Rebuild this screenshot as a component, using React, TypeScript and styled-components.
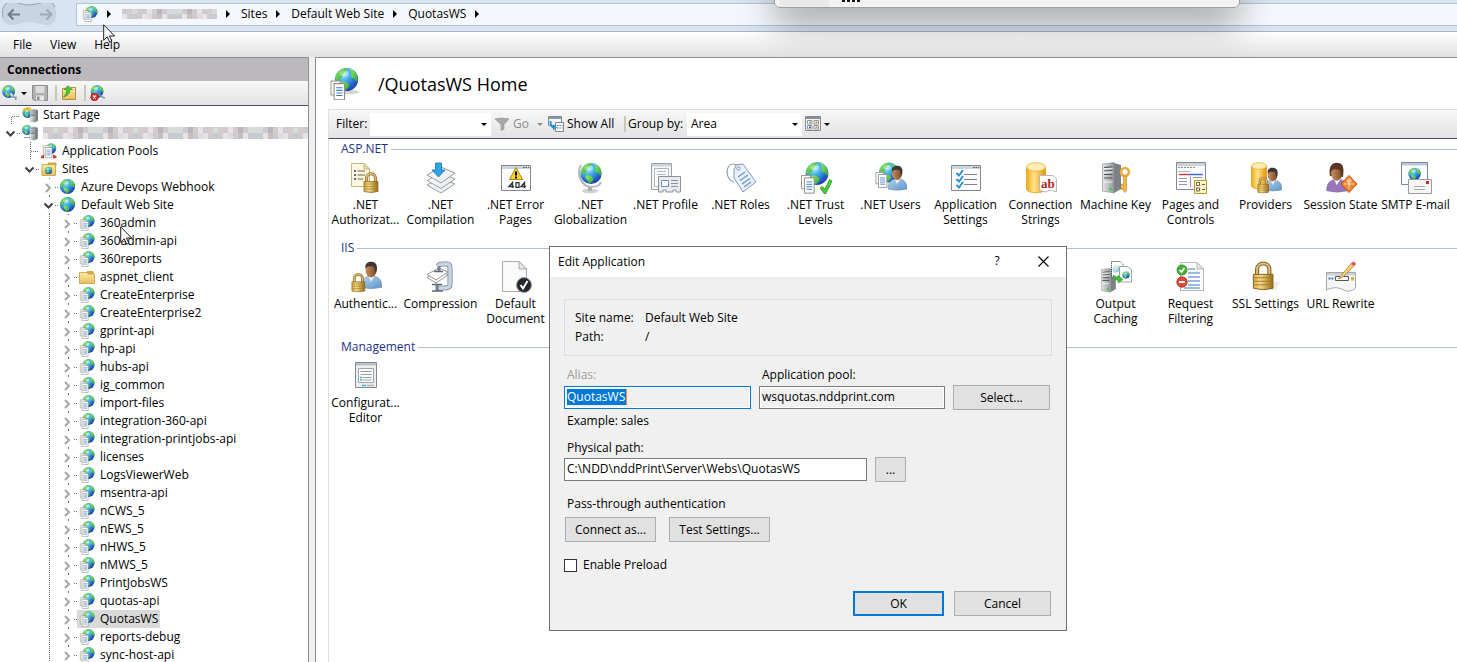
import React from 'react';
import styled, { createGlobalStyle } from 'styled-components';

const GlobalStyle = createGlobalStyle`
  * { box-sizing: border-box; }
  html, body, #root { height: 100%; margin: 0; }
  body {
    overflow: hidden;
    background: #f0f0f0;
    color: #000;
    font: 12px/16px 'Open Sans', 'Noto Sans', sans-serif;
  }
  button, input, select { font: inherit; color: inherit; margin: 0; }
`;

/* ---------- shared drawing parts ---------- */

const HiddenSvg = styled.svg`
  position: absolute;
  width: 0;
  height: 0;
`;

const Defs = () => (
  <HiddenSvg aria-hidden="true">
    <defs>
      <radialGradient id="ocean" cx="0.35" cy="0.25" r="0.85">
        <stop offset="0" stopColor="#bdf0fc" />
        <stop offset="0.35" stopColor="#45b4ea" />
        <stop offset="0.75" stopColor="#2458c8" />
        <stop offset="1" stopColor="#183a94" />
      </radialGradient>
      <linearGradient id="land" x1="0" y1="0" x2="1" y2="1">
        <stop offset="0" stopColor="#98e868" />
        <stop offset="1" stopColor="#28a834" />
      </linearGradient>
      <linearGradient id="gold" x1="0" y1="0" x2="1" y2="0">
        <stop offset="0" stopColor="#d8ac48" />
        <stop offset="0.35" stopColor="#f4dc8c" />
        <stop offset="1" stopColor="#9a6a14" />
      </linearGradient>
      <linearGradient id="drum" x1="0" y1="0" x2="1" y2="0">
        <stop offset="0" stopColor="#f0a81c" />
        <stop offset="0.4" stopColor="#ffe488" />
        <stop offset="1" stopColor="#e89208" />
      </linearGradient>
      <linearGradient id="metal" x1="0" y1="0" x2="1" y2="0">
        <stop offset="0" stopColor="#e4e6e8" />
        <stop offset="1" stopColor="#94989c" />
      </linearGradient>
      <linearGradient id="folder" x1="0" y1="0" x2="0" y2="1">
        <stop offset="0" stopColor="#fdeaa6" />
        <stop offset="1" stopColor="#e8bf58" />
      </linearGradient>
      <linearGradient id="shirt" x1="0" y1="0" x2="1" y2="1">
        <stop offset="0" stopColor="#b4d4f0" />
        <stop offset="1" stopColor="#5c94c8" />
      </linearGradient>
      <linearGradient id="skin" x1="0" y1="0" x2="1" y2="0">
        <stop offset="0" stopColor="#c89060" />
        <stop offset="1" stopColor="#7c4a24" />
      </linearGradient>
      <linearGradient id="paper" x1="0" y1="0" x2="1" y2="1">
        <stop offset="0" stopColor="#ffffff" />
        <stop offset="1" stopColor="#e4e8ec" />
      </linearGradient>
    </defs>
  </HiddenSvg>
);

const Glyph = styled.svg`
  display: block;
  flex: none;
`;

type At = { x: number; y: number; s?: number };

const place = ({ x, y, s = 1 }: At) => `translate(${x} ${y}) scale(${s})`;

const Globe = (p: At) => (
  <g transform={place(p)}>
    <circle r="10" fill="url(#ocean)" />
    <path fill="url(#land)" d="M-9 -4C-7 -8 -3 -10 1 -9.6C1 -8 -1 -7 -2 -5.6C-4 -5 -3 -2 -5 -1C-6 1 -8 1 -9.4 0Z" />
    <path fill="url(#land)" d="M3 -9.4C7 -8 10 -4 9.8 0C9 3 8 2 7 -.6C4 -1 3 -3 4.4 -5C3 -6 4 -8 3 -9.4Z" />
    <path fill="url(#land)" d="M-5 2C-2 1 2 3 2.4 5C2 7 0 9 -1.4 9.4C-3 8 -3 6 -5 5Z" />
    <ellipse cx="-2" cy="-5" rx="4" ry="2.4" fill="#fff" opacity="0.35" />
  </g>
);

/* two overlapping sheets of paper, 14 x 19 */
const Sheets = (p: At) => (
  <g transform={place(p)}>
    <path fill="#fbfaf6" stroke="#a09a88" d="M.5 .5H9.500V14H.5Z" />
    <path fill="#fff" stroke="#8c8c88" d="M3.500 3H13.500V18.500H3.500Z" />
    <path stroke="#3f7ac0" d="M5.500 7H11.500M5.500 9.500H11.500M5.500 12H11.500M5.500 14.500H11.500" />
  </g>
);

const Lock = (p: At) => (
  <g transform={place(p)}>
    <path fill="none" stroke="#8c6a24" strokeWidth="3" d="M3.600 10V6C3.600 .4 12.400 .4 12.400 6V10" />
    <path fill="none" stroke="#dcc07c" strokeWidth="1.400" d="M3.600 10V6C3.600 .4 12.400 .4 12.400 6V10" />
    <path fill="url(#gold)" stroke="#8a6218" strokeWidth=".7" d="M1 9.500H15V19.500Q8 21.500 1 19.500Z" />
    <path stroke="#a87a24" strokeWidth=".7" d="M1 12H15M1 14.500H15M1 17H15" />
  </g>
);

/* head and shoulders, 20 x 24 */
const Person = ({ shirt = 'url(#shirt)', hair = '#3c3634', ...p }: At & { shirt?: string; hair?: string }) => (
  <g transform={place(p)}>
    <path fill={shirt} stroke="#6a86a4" strokeWidth=".5" d="M1 23C1 16 4 14 8 13L10 17L13 13C18 14 20 17 20 23Q10 25.500 1 23Z" />
    <path fill="#f4f4f4" d="M7.500 12.500L10 18L13.500 12.500Z" />
    <ellipse cx="10" cy="7.500" rx="5" ry="6.500" fill="url(#skin)" />
    <path fill={hair} d="M5 6C4 0 9 -1 12 0C16 1 16 6 14.600 10C13 8 14 5 12 4C9 4 7 3 5 6Z" />
  </g>
);

const Tower = (p: At) => (
  <g transform={place(p)}>
    <path fill="#7c8084" d="M12 1L19 3V27L12 31Z" />
    <path fill="url(#metal)" stroke="#85898d" strokeWidth=".6" d="M.5 2L12 .5V31L.5 29Z" />
    <path stroke="#4c5054" strokeWidth="1.200" d="M2 5.500L10.500 4.800M2 9L10.500 8.500M2 12.500L10.500 12.500M2 16H10.500" />
    <path stroke="#fff" strokeWidth=".8" d="M2 6.800L10.500 6.200M2 10.300L10.500 9.800M2 20H10.500" />
    <circle cx="8.500" cy="27" r="1.500" fill="#3fd03a" />
  </g>
);

/* ---------- 16px glyphs ---------- */

const Small: Record<string, React.ReactNode> = {
  app: (
    <>
      <Globe x={9.5} y={6} s={0.6} />
      <Sheets x={1} y={4.5} s={0.6} />
    </>
  ),
  globe: <Globe x={7.5} y={7.5} s={0.76} />,
  folder: (
    <>
      <path fill="#d8a840" d="M8 2H14L15 4V14H8Z" />
      <path fill="url(#folder)" stroke="#c89c40" strokeWidth=".8" d="M.5 3.500H8L9 5H15.500V14.500H.5Z" />
    </>
  ),
  sites: (
    <>
      <path fill="#e8bf60" stroke="#b88c34" strokeWidth=".8" d="M7 2H15V5H7Z" />
      <path fill="url(#folder)" stroke="#c89c40" strokeWidth=".8" d="M1 3.500H14.500V14.500H1Z" />
      <Globe x={7.5} y={9.4} s={0.36} />
    </>
  ),
  server: (
    <>
      <Globe x={5} y={5} s={0.5} />
      <Tower x={7.5} y={1.5} s={0.44} />
      <path stroke="#9a9c9e" d="M2 12.500H8" />
    </>
  ),
  start: (
    <>
      <Globe x={5.5} y={6} s={0.5} />
      <path fill="none" stroke="#f0b020" strokeWidth="2" d="M1 3Q5 0 10 4" />
      <path fill="#ffd858" stroke="#d89010" strokeWidth=".5" d="M5 0L9 1L8 5Z" />
      <Tower x={8} y={2} s={0.43} />
    </>
  ),
  pools: (
    <>
      <Globe x={10} y={5.5} s={0.52} />
      <path fill="#d43c2c" d="M0 13L3 11.500V15.500L0 15ZM15.500 13L12 11.500V15.500L15.500 15Z" />
      <Sheets x={2} y={2.5} s={0.66} />
    </>
  ),
  connect: (
    <>
      <Globe x={6.5} y={6.5} s={0.64} />
      <path fill="none" stroke="#7b9aac" strokeWidth="1.600" d="M8 9L11 12L14 12.500L13.500 15" />
      <path fill="#c4d4dc" stroke="#67808e" strokeWidth=".6" d="M7 9L9.500 7.500L12 10.500L10 12.500Z" />
    </>
  ),
  disconnect: (
    <>
      <Globe x={7} y={6.5} s={0.64} />
      <path fill="none" stroke="#7b9aac" strokeWidth="1.600" d="M9 9L12 12L15 13" />
      <circle cx="4.500" cy="12" r="3.800" fill="#d42c2c" stroke="#981818" strokeWidth=".6" />
      <path stroke="#fff" strokeWidth="1.300" d="M3 10.500L6 13.500M6 10.500L3 13.500" />
    </>
  ),
  save: (
    <>
      <path fill="#b0b0b0" stroke="#909090" d="M.5 .5H15.500V15.500H2L.5 14Z" />
      <path fill="#dedede" d="M3.500 1H12.500V8H3.500Z" />
      <path fill="#e6e6e6" d="M4 10.500H12V15.500H4Z" />
      <path fill="#8c8c8c" d="M5 11.500H7.500V15H5Z" />
    </>
  ),
  up: (
    <>
      <path fill="url(#folder)" stroke="#b89038" d="M1.500 3.500H9L10 2.500H14.500V14.500H1.500Z" />
      <path fill="#4cc42c" stroke="#2c8a1c" strokeWidth=".6" d="M7 .8L11.500 4.500H9C9 8 7 10.500 2.500 12C5 9.500 5.500 7.500 5.500 4.500H3Z" />
    </>
  ),
  funnel: <path fill="#a8a8a8" stroke="#909090" strokeWidth=".6" d="M1 3Q8 1 15 3L10 8.500V13L7 14.500V8.500Z" />,
  showall: (
    <>
      <path fill="#f4f6f8" stroke="#7c8894" d="M.5 .5H13.500V9.500H.5Z" />
      <path fill="#8c98a4" d="M1 1H13V3H1Z" />
      <path fill="#fff" stroke="#7c8894" d="M7.500 6.500H15.500V15.500H7.500Z" />
      <path stroke="#5068a0" strokeDasharray="1.400 1" d="M9 9.500H14.500M9 12H14.500" />
      <path fill="none" stroke="#2c94d4" strokeWidth="2" d="M2.500 5Q2 11 6.500 11.500" />
      <path fill="#2c94d4" d="M5 8.500L9 11.500L5 14.500Z" />
    </>
  ),
  view: (
    <>
      <path fill="#f4f6fa" stroke="#84888c" d="M.5 .5H15.500V14.500H.5Z" />
      <path fill="#84909c" d="M1 1H15V3H1Z" />
      <path fill="#fff" stroke="#8894a0" d="M2.500 4.500H7V8H2.500ZM9 4.500H13.500V8H9ZM2.500 9.500H7V13H2.500ZM9 9.500H13.500V13H9Z" />
      <path fill="#d88a3c" d="M10.500 5.500H12.500V7H10.500ZM10.500 10.500H12.500V12H10.500Z" />
      <path fill="#3c64b8" d="M4 10.500H6V12H4Z" />
      <path fill="#b8a03c" d="M4 5.500H6V7H4Z" />
    </>
  ),
};

const SmallIcon = ({ name }: { name: string }) => (
  <Glyph width="16" height="16" viewBox="0 0 16 16" aria-hidden="true">
    {Small[name]}
  </Glyph>
);

/* ---------- 32px glyphs ---------- */

const windowFrame = (
  <>
    <path fill="#fcfcfe" stroke="#84898e" d="M1.500 3.500H30.500V28.500H1.500Z" />
    <path fill="#ccd4da" d="M2 4H30V7H2Z" />
    <path stroke="#50565c" strokeDasharray="1.500 1" d="M23 5.500H29" />
  </>
);

const Large: Record<string, React.ReactNode> = {
  home: (
    <>
      <ellipse cx="20" cy="24" rx="9" ry="2" fill="#d4d4d4" />
      <Globe x={16.5} y={11.5} s={1.16} />
      <Sheets x={0.5} y={12.5} s={1.04} />
    </>
  ),
  authorization: (
    <>
      <path fill="#fdf8e0" stroke="#c4b880" d="M1.500 1.500H14L19.500 7V24.500H1.500Z" />
      <path fill="#e8dca8" stroke="#c4b880" d="M14 1.500V7H19.500Z" />
      <path stroke="#6c6448" strokeWidth="1.200" d="M7.500 9H15M7.500 13H15M7.500 17H13" />
      <path stroke="#70648c" strokeWidth="2" d="M4 9H6M4 13H6M4 17H6" />
      <Lock x={13} y={10} s={1} />
    </>
  ),
  compilation: (
    <>
      <path fill="url(#paper)" stroke="#9a9ea2" d="M2 23L16 16L30 22L16 31Z" />
      <path fill="url(#paper)" stroke="#9a9ea2" d="M2 18.500L16 11L30 17L16 26.500Z" />
      <path fill="url(#paper)" stroke="#9a9ea2" d="M2 13L16 5L30 11L16 21Z" />
      <path fill="#2ea4e4" stroke="#1870b0" strokeWidth=".8" d="M10.500 1H16.500V8H20L13.500 15L7 8H10.500Z" />
    </>
  ),
  errors: (
    <>
      {windowFrame}
      <path fill="#fcd424" stroke="#a48a10" d="M16 5.500L22.500 17.500H9.500Z" strokeLinejoin="round" />
      <path stroke="#000" strokeWidth="2" d="M16 9.500V13.500M16 14.500V16.500" />
      <path fill="none" stroke="#303438" strokeWidth="1.300" d="M12.500 26V20.500L9 24.500H14M16 20.700H19V25.300H16ZM24.500 26V20.500L21 24.500H26" />
    </>
  ),
  globalization: (
    <>
      <ellipse cx="15" cy="29" rx="8" ry="2.300" fill="#d0d4d8" />
      <path fill="#acb0b4" d="M13 24H17V29H13Z" />
      <path fill="none" stroke="#b4b8bc" strokeWidth="2" d="M6 3C1 12 6 24 16 25C22 25 25 23 26 20" />
      <Globe x={16} y={11.5} s={1.06} />
    </>
  ),
  profile: (
    <>
      <path fill="#f6f7f8" stroke="#9a9fa4" d="M1.500 1.500H21.500V27.500H1.500Z" />
      <path fill="#ccd2d8" d="M2 2H21V4.500H2Z" />
      <path fill="#fff" stroke="#b0b5ba" d="M4.500 6.500H18.500V24.500H4.500Z" />
      <path stroke="#b0b5ba" d="M7 9.500H16M7 12.500H16" />
      <path fill="#e8ecf2" stroke="#8c9196" d="M8.500 14.500H30.500V30H26V28H23V30H16V28H13V30H8.500Z" />
      <path fill="#fff" stroke="#6c90c4" d="M11.500 18.500H18.500V24.500H11.500Z" />
      <path stroke="#8c9196" d="M21 18.500H28M21 21.500H28M21 24.500H28" />
    </>
  ),
  roles: (
    <>
      <path fill="none" stroke="#94a0ac" strokeWidth="1.200" d="M9 20C0 18 0 2 8 2C12 2 15 5 14 7" />
      <path fill="#e6f0fa" stroke="#8098b0" d="M9 8L11 3L18 2L31 20L18 30L9 16Z" strokeLinejoin="round" />
      <circle cx="13.500" cy="6.500" r="1.600" fill="#fff" stroke="#70849a" />
      <path stroke="#6890c0" strokeWidth="1.100" d="M13 15L20 10M15 18.500L23 13M17 22L25 16.500M19 25L26 20" />
    </>
  ),
  trust: (
    <>
      <Globe x={17} y={11.5} s={1.14} />
      <Sheets x={1} y={13} s={0.98} />
      <path fill="none" stroke="#2c8a20" strokeWidth="3.600" d="M21 25L25 30L31 18" />
      <path fill="none" stroke="#4cc83c" strokeWidth="2.400" d="M21 25L25 30L31 18" />
    </>
  ),
  users: (
    <>
      <Globe x={14} y={10.5} s={1} />
      <Sheets x={0.5} y={10} s={0.84} />
      <Person x={12} y={4} s={1} />
    </>
  ),
  settings: (
    <>
      {windowFrame}
      <path stroke="#7c8288" strokeWidth="1.100" d="M14 12.500H27M14 17.500H27M14 22.500H27" />
      <path fill="none" stroke="#2c90d4" strokeWidth="2" d="M6.500 11L9 13.500L13 8M6.500 17L9 19.500L13 14M6.500 23L9 25.500L13 20" />
    </>
  ),
  strings: (
    <>
      <path fill="url(#drum)" stroke="#e0a020" strokeWidth=".8" d="M1.500 5V27C2 32 20 32 20.500 27V5" />
      <ellipse cx="11" cy="5" rx="9.500" ry="4.200" fill="#ffeeb4" stroke="#e8b038" strokeWidth=".8" />
      <path fill="#fff" stroke="#b8b8b8" d="M14.500 13.500H28L31.500 17V30L26 28L20 30L14.500 28Z" />
      <text x="16" y="26" fontFamily="Liberation Serif, serif" fontWeight="700" fontSize="13" fill="#a81c1c">ab</text>
    </>
  ),
  machine: (
    <>
      <Tower x={2} y={0} />
      <path fill="none" stroke="#e8ac40" strokeWidth="2.600" d="M25 6A4 4 0 1 1 24.900 6Z" />
      <path fill="#f0b848" stroke="#b0741c" strokeWidth=".5" d="M23.500 14H26.500V29L25 30.500L23.500 29V27.500H21V25.500H23.500V24H21V22H23.500Z" />
    </>
  ),
  pages: (
    <>
      <path fill="#fcfcfe" stroke="#84898e" d="M1.500 .5H30.500V27.500H1.500Z" />
      <path fill="#ccd4da" d="M2 1H30V4H2Z" />
      <path stroke="#8c9298" strokeDasharray="2 1" d="M3 5.500H20" />
      <path stroke="#b0b6bc" d="M3 9.500H15" />
      <path stroke="#d43c3c" strokeWidth="1.400" d="M4 12.500H14" />
      <path stroke="#3c64e8" strokeWidth="1.400" d="M14 12.500H28" />
      <path stroke="#94999e" d="M4 16.500H12M4 19.500H12M4 22.500H12M15.500 15V25M18 15.500H27" />
      <path fill="#fcf4c8" stroke="#b4982c" d="M19.500 18.500H31.500V31.500H19.500Z" />
      <path fill="#fff" stroke="#6c6048" d="M21.500 20.500H24.500V23.500H21.500ZM21.500 26H24.500V29H21.500ZM27 22.500H30M27 27.500H30" />
    </>
  ),
  providers: (
    <>
      <path fill="url(#drum)" stroke="#e0a020" strokeWidth=".8" d="M1.500 4V24C2 28 16 28 16.500 24V4" />
      <ellipse cx="9" cy="4" rx="7.500" ry="3.300" fill="#ffeeb4" stroke="#e8b038" strokeWidth=".8" />
      <Person x={13} y={6} s={0.95} />
      <Lock x={7} y={15} s={0.78} />
    </>
  ),
  session: (
    <>
      <path fill="#5c3424" d="M5 14C3 4 8 0 13 1C19 1 19 8 18 15Z" />
      <Person x={0.5} y={3} s={1.12} shirt="#9c74b8" hair="#5c3424" />
      <path fill="#f08430" stroke="#b45010" d="M24 13.500L32 22L24 30.500L16 22Z" />
      <path fill="#fcc488" d="M24 16L27 19L24 22L21 19Z" />
      <path stroke="#fcd8b0" d="M19 22H29M24 17V27" />
    </>
  ),
  smtp: (
    <>
      <path fill="#fcfcfe" stroke="#7488a4" d="M1.500 .5H27.500V22.500H1.500Z" />
      <path fill="#bcc8d8" d="M2 1H27V3.500H2Z" />
      <Globe x={14.5} y={12} s={0.62} />
      <path fill="#f6f6f6" stroke="#9c9c9c" d="M8.500 17.500H31.500V31.500H8.500Z" />
      <path stroke="#a8a8a8" d="M14 24.500H25M14 27.500H25" />
      <path fill="#d42c2c" d="M26 19H29V22H26Z" />
    </>
  ),
  authentication: (
    <>
      <Person x={10} y={1} s={1.1} />
      <Lock x={1} y={12} s={0.92} />
    </>
  ),
  compression: (
    <>
      <path fill="none" stroke="#74849a" strokeWidth="5" d="M13 5Q14 3 18 3H22Q25 3 25 7V23Q25 27 20 27H12" />
      <path fill="none" stroke="#c8d4e4" strokeWidth="3.400" d="M13 5Q14 3 18 3H22Q25 3 25 7V23Q25 27 20 27H12" />
      <path fill="#fff" stroke="#94989c" d="M2 16.500L14 10L23 14L11 22Z" />
      <path fill="#fff" stroke="#94989c" d="M2 13.500L14 7L23 11L11 19Z" />
      <path stroke="#74808c" strokeWidth="3" d="M14 5V10M12 23V30" />
      <path stroke="#5c6874" strokeWidth="1.600" d="M9 10.500H18M7 23.500H17M7 30H18" />
    </>
  ),
  document: (
    <>
      <path fill="#fafafa" stroke="#a8acb0" d="M2.500 .5H19L26.500 8V30.500H2.500Z" />
      <path fill="#e4e6e8" stroke="#a8acb0" d="M19 .5V8H26.500Z" />
      <circle cx="24" cy="24" r="7.500" fill="#24282c" stroke="#9a9ea2" />
      <path fill="none" stroke="#fff" strokeWidth="2" d="M20.500 24L23 27.500L27.500 20" />
    </>
  ),
  caching: (
    <>
      <Tower x={1} y={7} s={0.78} />
      <path fill="#fff" stroke="#202428" strokeDasharray="1 1" d="M11.500 .5H20L23 3.500V16H11.500Z" />
      <path fill="#fcfcfc" stroke="#a0a4a8" d="M19.500 5.500H28L31.500 9V21H19.500Z" />
      <g opacity="0.4"><Globe x={16} y={8} s={0.34} /></g>
      <Globe x={26} y={14} s={0.36} />
      <path fill="#3cc43c" stroke="#1c8c1c" strokeWidth=".5" d="M13 14L18 17V14.500L23 18.500L18 22V19.500C15 19 13 17 13 14Z" />
    </>
  ),
  filtering: (
    <>
      <path fill="#fdfdfd" stroke="#b4b8bc" d="M5.500 1.500H22L28.500 8V29.500H5.500Z" />
      <path fill="#e4e6e8" stroke="#b4b8bc" d="M22 1.500V8H28.500Z" />
      <path stroke="#3c78c4" strokeWidth="1.200" d="M13 8H20M13 12H25M13 16H25M13 20H25M13 24H25M9 27H25" />
      <circle cx="7" cy="9" r="5" fill="#48b03c" stroke="#2c7c24" strokeWidth=".8" />
      <path fill="none" stroke="#fff" strokeWidth="1.600" d="M4.500 9L6.500 11L9.500 7" />
      <circle cx="7" cy="21" r="5.200" fill="#e04c38" stroke="#a42418" strokeWidth=".8" />
      <path stroke="#fff" strokeWidth="2" d="M4 21H10" />
    </>
  ),
  ssl: (
    <>
      <path fill="#ececec" d="M22 22L31 20L26 29H20Z" />
      <Lock x={2} y={0} s={1.4} />
    </>
  ),
  rewrite: (
    <>
      <path fill="#f6f6f4" stroke="#a4a8ac" d="M1.500 11.500H30.500V27Q24 33 17 28Q9 25 1.500 29Z" />
      <path fill="#ccd0d4" d="M2 12H30V14.500H2Z" />
      <path fill="#fff" stroke="#54585c" d="M10.500 15.500H23.500V19.500H10.500Z" />
      <path stroke="#3c78c4" strokeWidth="2" strokeDasharray="2 1" d="M3.500 17.500H8.500" />
      <path fill="#d4b054" d="M26 16H29V19.500H26Z" />
      <path fill="#f4cc74" stroke="#a07830" strokeWidth=".7" d="M14 17L26 2.500L29 5L17.500 16.500L13.500 18Z" />
      <path fill="#d85c5c" d="M26 2.500L28 .5Q31 1 31 3.500L29 5Z" />
    </>
  ),
  configuration: (
    <>
      <path fill="#eceef0" stroke="#84898e" d="M5.500 2.500H26.500V27.500H5.500Z" />
      <path fill="#b8c0c8" d="M6 3H26V5.500H6Z" />
      <path fill="#fff" stroke="#a0a5aa" d="M8.500 8.500H23.500V22.500H8.500Z" />
      <path stroke="#94999e" d="M10.500 11.500H21.500M10.500 14.500H21.500M13 17.500H21.500M13 20H21.500" />
      <path stroke="#34b8dc" strokeWidth="1.400" d="M10 17.500H12M10 20H12M12 25.500H16" />
      <path stroke="#b0b4b8" strokeWidth="1.400" d="M17 25.500H24" />
    </>
  ),
};

const LargeIcon = ({ name }: { name: string }) => (
  <Glyph width="32" height="32" viewBox="0 0 32 32" aria-hidden="true">
    {Large[name]}
  </Glyph>
);

const Caret = styled.span<{ $muted?: boolean }>`
  flex: none;
  width: 0;
  height: 0;
  border: 3px solid transparent;
  border-top-color: ${(p) => (p.$muted ? '#8c8c8c' : '#000')};
  border-bottom: 0;
`;

const tones = ['#cfcacf', '#b9b5ba', '#dddbdd', '#d3ccc8', '#c6cbd0', '#e6e4e6', '#c8c0be', '#d6dad8'];

/* pixelated bar that masks a private host name */
const Redacted = ({ cells, height = 10 }: { cells: number; height?: number }) => (
  <Glyph width={cells * 5} height={height} viewBox={`0 0 ${cells * 5} ${height}`} aria-hidden="true">
    {Array.from({ length: cells * 2 }, (_, i) => {
      const col = i >> 1;
      const row = i & 1;
      return (
        <rect
          key={i}
          x={col * 5}
          y={(row * height) / 2}
          width="5"
          height={height / 2}
          fill={tones[(col * 3 + row * 5 + ((col * col) >> 2)) % tones.length]}
        />
      );
    })}
  </Glyph>
);

/* ---------- window chrome ---------- */

const Shell = styled.div`
  position: relative;
  display: flex;
  flex-direction: column;
  height: 100vh;
  overflow: hidden;
`;

const AddressBar = styled.header`
  flex: none;
  display: flex;
  align-items: flex-start;
  height: 32px;
  padding: 3px 0 0 2px;
  background: #d8e4f2;
  border-bottom: 1px solid #a8b4c2;
`;

const Breadcrumb = styled.nav`
  flex: 1;
  display: flex;
  align-items: center;
  height: 23px;
  margin-left: 18px;
  padding: 0 0 1px 5px;
  background: #f4f7fb;
  border: 1px solid #b4c3d5;
  border-right: 0;
`;

const Crumb = styled.a`
  color: inherit;
  text-decoration: none;
  white-space: nowrap;
`;

const CrumbArrow = styled.span`
  flex: none;
  width: 0;
  height: 0;
  margin: 0 11px 0 9px;
  border: 4px solid transparent;
  border-left-color: #000;
  border-right: 0;
`;

const MenuBar = styled.nav`
  flex: none;
  display: flex;
  align-items: center;
  gap: 6px;
  height: 25px;
  padding-left: 7px;
  background: linear-gradient(#fff, #e3e1e3);
`;

const MenuItem = styled.button`
  padding: 0 6px;
  border: 0;
  background: none;
`;

const Panes = styled.div`
  flex: 1;
  min-height: 0;
  display: grid;
  grid-template-columns: 309px minmax(0, 1fr);
  gap: 6px;
`;

const Sidebar = styled.aside`
  display: flex;
  flex-direction: column;
  min-height: 0;
  background: #fff;
  border-top: 1px solid #8c8f92;
  border-right: 1px solid #8c8f92;
`;

const PaneTitle = styled.h2`
  flex: none;
  margin: 0;
  padding-left: 7px;
  background: #bcb9bc;
  font-size: 12px;
  line-height: 23px;
`;

const SideTools = styled.div`
  flex: none;
  display: flex;
  align-items: center;
  gap: 2px;
  height: 25px;
  padding-left: 2px;
  background: linear-gradient(#f8f8f8, #e4e2e4);
  border-bottom: 1px solid #4b4a66;
`;

const ToolButton = styled.button<{ $muted?: boolean }>`
  flex: none;
  display: flex;
  align-items: center;
  gap: 3px;
  padding: 0;
  border: 0;
  background: none;
  white-space: nowrap;
  color: ${(p) => (p.$muted ? '#8c8c8c' : 'inherit')};
`;

const Divider = styled.span`
  flex: none;
  width: 2px;
  height: 16px;
  margin: 0 2px 0 5px;
  background: #c9c8b4;
`;

const Tree = styled.ul`
  flex: 1;
  min-height: 0;
  margin: 0;
  padding: 0;
  overflow: hidden;
  list-style: none;
`;

const TreeRow = styled.li`
  display: flex;
  align-items: center;
  height: 18px;
  white-space: nowrap;
`;

const NodeLabel = styled.span<{ $selected?: boolean }>`
  display: flex;
  align-items: center;
  height: 18px;
  gap: 3px;
  padding: 0 2px;
  background: ${(p) => (p.$selected ? '#d9d9d9' : 'transparent')};
`;

const NodeText = styled.span`
  padding-left: 2px;
`;

const Main = styled.main`
  display: flex;
  flex-direction: column;
  min-width: 0;
  padding-left: 12px;
  background: #fff;
  border-top: 1px solid #8c8f92;
  border-left: 1px solid #8c8f92;
`;

const PageTitle = styled.h1`
  flex: none;
  display: flex;
  align-items: center;
  gap: 16px;
  height: 51px;
  margin: 0;
  padding-left: 2px;
  font-size: 18px;
  font-weight: 400;
`;

const FilterBar = styled.div`
  flex: none;
  display: flex;
  align-items: center;
  height: 30px;
  padding-left: 7px;
  background: linear-gradient(#f8f8f8, #e4e2e4);
  border-top: 1px solid #e0e0e0;
  border-left: 1px solid #e0e0e0;
  border-bottom: 1px solid #4b4a66;
`;

const BarLabel = styled.label<{ $width: number }>`
  flex: none;
  width: ${(p) => p.$width}px;
  white-space: nowrap;
`;

const Combo = styled.span<{ $width: number }>`
  flex: none;
  display: flex;
  align-items: center;
  width: ${(p) => p.$width}px;
  height: 23px;
  padding-right: 4px;
  background: #fff;

  input, select {
    flex: 1;
    min-width: 0;
    padding: 0 4px;
    border: 0;
    outline: 0;
    background: none;
    appearance: none;
  }
`;

const ToolSlot = styled.span<{ $width: number; $indent?: number }>`
  flex: none;
  display: flex;
  align-items: center;
  width: ${(p) => p.$width}px;
  padding-left: ${(p) => p.$indent ?? 0}px;
`;

const FeatureArea = styled.div`
  flex: 1;
  min-height: 0;
  overflow: hidden;
  box-shadow: inset 1px 0 #e0e0e0;
`;

const Group = styled.section`
  min-height: 99px;
`;

const GroupTitle = styled.h3`
  display: flex;
  align-items: center;
  gap: 3px;
  height: 20px;
  margin: 0;
  padding-left: 13px;
  color: #1e3287;
  font-size: 12px;
  font-weight: 400;

  &::after {
    content: '';
    flex: 1;
    height: 1px;
    background: #b0bcdc;
  }
`;

const FeatureGrid = styled.div`
  display: grid;
  grid-template-columns: repeat(auto-fill, 75px);
  padding-top: 3px;
`;

const Feature = styled.button<{ $column?: number }>`
  display: flex;
  flex-direction: column;
  align-items: center;
  gap: 3px;
  height: 76px;
  padding: 0;
  border: 0;
  background: none;
  line-height: 15px;
  white-space: pre;
  ${(p) => (p.$column ? `grid-column-start: ${p.$column};` : '')}
`;

/* ---------- dialog ---------- */

const Dialog = styled.section`
  position: absolute;
  left: 549px;
  top: 246px;
  width: 518px;
  background: #f0f0f0;
  border: 1px solid #6e7072;
`;

const DialogBar = styled.header`
  display: flex;
  align-items: center;
  height: 30px;
  padding-left: 8px;
  background: #fff;
`;

const DialogTitle = styled.h2`
  flex: 1;
  margin: 0;
  font-size: 12px;
  font-weight: 400;
`;

const BarButton = styled.button`
  display: flex;
  align-items: center;
  justify-content: center;
  width: 46px;
  height: 30px;
  padding: 0 0 2px;
  border: 0;
  background: none;
`;

const DialogForm = styled.form`
  display: flex;
  flex-direction: column;
  padding: 22px 14px 14px;
`;

const Summary = styled.dl`
  display: grid;
  grid-template-columns: 70px 1fr;
  grid-auto-rows: 19px;
  align-items: center;
  height: 57px;
  margin: 0 0 11px;
  padding: 8px 10px;
  border: 1px solid #dcdcdc;

  dd { margin: 0; }
`;

const FieldGrid = styled.div`
  display: grid;
  grid-template-columns: 187px 186px 97px;
  align-items: center;
  gap: 2px 8px;
  margin-bottom: 3px;
`;

const Label = styled.label<{ $muted?: boolean }>`
  padding-left: 3px;
  color: ${(p) => (p.$muted ? '#9c9c9c' : 'inherit')};
`;

const Note = styled.p`
  margin: 0;
  padding-left: 3px;
`;

const TextInput = styled.input<{ $width?: number }>`
  width: ${(p) => (p.$width ? `${p.$width}px` : '100%')};
  height: 23px;
  padding: 0 2px 2px;
  border: 1px solid #7a7a7a;
  outline: 0;
  background: #fff;

  &:read-only {
    background: #f0f0f0;
    box-shadow: inset 0 0 0 1px #fff;
  }
`;

const AliasBox = styled.div`
  display: flex;
  align-items: center;
  height: 23px;
  padding: 0 2px 2px;
  border: 1px solid #0078d7;
  background: #f0f0f0;
  box-shadow: inset 0 0 0 1px #fff;
`;

const AliasInput = styled.input`
  width: 60px;
  height: 16px;
  padding: 0;
  border: 0;
  border-right: 1px solid #f08a3c;
  outline: 0;
  background: #0078d7;
  color: #fff;
`;

const PushButton = styled.button<{ $width: number; $primary?: boolean }>`
  width: ${(p) => p.$width}px;
  height: 25px;
  padding: 0;
  border: ${(p) => (p.$primary ? '2px solid #0078d7' : '1px solid #adadad')};
  background: #e1e1e1;
`;

const ButtonRow = styled.div<{ $gap: number; $top: number; $indent?: number }>`
  display: flex;
  align-items: center;
  gap: ${(p) => p.$gap}px;
  margin-top: ${(p) => p.$top}px;
  padding-left: ${(p) => p.$indent ?? 0}px;
`;

const AuthBlock = styled.div`
  margin-top: 14px;
`;

const CheckLabel = styled.label`
  display: flex;
  align-items: center;
  gap: 6px;
  margin-top: 15px;

  input {
    appearance: none;
    width: 13px;
    height: 13px;
    border: 1px solid #333;
    background: #fff;
  }
`;

const Actions = styled.div`
  display: flex;
  justify-content: flex-end;
  gap: 10px;
  margin-top: 18px;
  padding-right: 1px;
`;

/* ---------- overlays ---------- */

const FloatingWindow = styled.div`
  position: absolute;
  left: 774px;
  top: -30px;
  width: 466px;
  height: 38px;
  padding: 29px 0 0 67px;
  border: 1px solid #a0a0a0;
  border-radius: 0 0 6px 6px;
  background: linear-gradient(90deg, #f3f3f3 4px, #eaeaea 4px 54px, #f3f3f3 54px);
  box-shadow: 0 16px 36px rgba(0, 0, 0, 0.34);
`;

const Pointer = styled.svg<{ $x: number; $y: number }>`
  position: absolute;
  left: ${(p) => p.$x}px;
  top: ${(p) => p.$y}px;
`;

const Cursor = ({ x, y }: { x: number; y: number }) => (
  <Pointer $x={x} $y={y} width="14" height="20" viewBox="0 0 14 20" aria-hidden="true">
    <path fill="#fff" stroke="#202020" strokeWidth="1" d="M.7 .8V16.200L4.300 12.800L6.600 18.200L8.800 17.200L6.500 12H11.600Z" />
  </Pointer>
);

/* ---------- tree ---------- */

type Twist = 'first' | 'root' | 'leaf' | 'open' | 'closed';
type Node = { text?: string; icon: string; level: number; twist: Twist; selected?: boolean };

const Twisty = ({ kind, level }: { kind: Twist; level: number }) => {
  const x = level * 19;
  const w = x + 20;
  return (
    <Glyph width={w} height="18" viewBox={`0 0 ${w} 18`} aria-hidden="true">
      <g stroke="#6c6c6c" strokeDasharray="1 1" fill="none">
        {level === 3 && <path d="M49.500 0V18" />}
        {kind === 'first' && <path d="M11.500 18V10.500H20" />}
        {kind === 'leaf' && <path d={`M${x + 11.5} 0V18M${x + 12} 9.500H${x + 20}`} />}
        {kind !== 'first' && kind !== 'leaf' && <path d={`M${x + 17} 9.500H${x + 20}`} />}
        {level > 1 && <path d={`M${x + 11.5} 0V1M${x + 11.5} 17V18`} />}
      </g>
      {kind === 'closed' && (
        <path fill="none" stroke="#a6a6a6" strokeWidth="2" d={`M${x + 8} 6L${x + 12} 10L${x + 8} 14`} />
      )}
      {(kind === 'open' || kind === 'root') && (
        <path fill="none" stroke="#404040" strokeWidth="2" d={`M${x + 6.5} 7.500L${x + 10.5} 11.500L${x + 14.5} 7.500`} />
      )}
    </Glyph>
  );
};

const apps = [
  '360admin', '360admin-api', '360reports', 'aspnet_client', 'CreateEnterprise', 'CreateEnterprise2',
  'gprint-api', 'hp-api', 'hubs-api', 'ig_common', 'import-files', 'integration-360-api',
  'integration-printjobs-api', 'licenses', 'LogsViewerWeb', 'msentra-api', 'nCWS_5', 'nEWS_5', 'nHWS_5',
  'nMWS_5', 'PrintJobsWS', 'quotas-api', 'QuotasWS', 'reports-debug', 'sync-host-api',
];

const nodes: Node[] = [
  { text: 'Start Page', icon: 'start', level: 0, twist: 'first' },
  { icon: 'server', level: 0, twist: 'root' },
  { text: 'Application Pools', icon: 'pools', level: 1, twist: 'leaf' },
  { text: 'Sites', icon: 'sites', level: 1, twist: 'open' },
  { text: 'Azure Devops Webhook', icon: 'globe', level: 2, twist: 'closed' },
  { text: 'Default Web Site', icon: 'globe', level: 2, twist: 'open' },
  ...apps.map((text): Node => ({
    text,
    icon: text === 'aspnet_client' ? 'folder' : 'app',
    level: 3,
    twist: 'closed',
    selected: text === 'QuotasWS',
  })),
];

/* ---------- features ---------- */

type Item = { icon: string; text: string; column?: number };

const groups: { title: string; items: Item[] }[] = [
  {
    title: 'ASP.NET',
    items: [
      { icon: 'authorization', text: '.NET\nAuthorizat...' },
      { icon: 'compilation', text: '.NET\nCompilation' },
      { icon: 'errors', text: '.NET Error\nPages' },
      { icon: 'globalization', text: '.NET\nGlobalization' },
      { icon: 'profile', text: '.NET Profile' },
      { icon: 'roles', text: '.NET Roles' },
      { icon: 'trust', text: '.NET Trust\nLevels' },
      { icon: 'users', text: '.NET Users' },
      { icon: 'settings', text: 'Application\nSettings' },
      { icon: 'strings', text: 'Connection\nStrings' },
      { icon: 'machine', text: 'Machine Key' },
      { icon: 'pages', text: 'Pages and\nControls' },
      { icon: 'providers', text: 'Providers' },
      { icon: 'session', text: 'Session State' },
      { icon: 'smtp', text: 'SMTP E-mail' },
    ],
  },
  {
    title: 'IIS',
    items: [
      { icon: 'authentication', text: 'Authentic...' },
      { icon: 'compression', text: 'Compression' },
      { icon: 'document', text: 'Default\nDocument' },
      { icon: 'caching', text: 'Output\nCaching', column: 11 },
      { icon: 'filtering', text: 'Request\nFiltering' },
      { icon: 'ssl', text: 'SSL Settings' },
      { icon: 'rewrite', text: 'URL Rewrite' },
    ],
  },
  { title: 'Management', items: [{ icon: 'configuration', text: 'Configurat...\nEditor' }] },
];

const EditDialog = () => (
  <Dialog role="dialog" aria-labelledby="dialog-title">
    <DialogBar>
      <DialogTitle id="dialog-title">Edit Application</DialogTitle>
      <BarButton type="button">?</BarButton>
      <BarButton type="button" aria-label="Close">
        <Glyph width="11" height="11" viewBox="0 0 11 11">
          <path stroke="#000" strokeWidth="1.100" d="M.5 .5L10.500 10.500M10.500 .5L.5 10.500" />
        </Glyph>
      </BarButton>
    </DialogBar>
    <DialogForm onSubmit={(e) => e.preventDefault()}>
      <Summary>
        <dt>Site name:</dt>
        <dd>Default Web Site</dd>
        <dt>Path:</dt>
        <dd>/</dd>
      </Summary>
      <FieldGrid>
        <Label htmlFor="alias" $muted>Alias:</Label>
        <Label htmlFor="pool">Application pool:</Label>
        <span />
        <AliasBox>
          <AliasInput id="alias" readOnly value="QuotasWS" />
        </AliasBox>
        <TextInput id="pool" readOnly value="wsquotas.nddprint.com" />
        <PushButton type="button" $width={97}>Select...</PushButton>
      </FieldGrid>
      <Note>Example: sales</Note>
      <ButtonRow $gap={0} $top={11}>
        <Label htmlFor="path">Physical path:</Label>
      </ButtonRow>
      <ButtonRow $gap={8} $top={1}>
        <TextInput id="path" $width={303} defaultValue="C:\NDD\nddPrint\Server\Webs\QuotasWS" />
        <PushButton type="button" $width={31}>...</PushButton>
      </ButtonRow>
      <AuthBlock>
        <Note>Pass-through authentication</Note>
        <ButtonRow $gap={13} $top={5} $indent={1}>
          <PushButton type="button" $width={91}>Connect as...</PushButton>
          <PushButton type="button" $width={101}>Test Settings...</PushButton>
        </ButtonRow>
      </AuthBlock>
      <CheckLabel>
        <input type="checkbox" />
        Enable Preload
      </CheckLabel>
      <Actions>
        <PushButton type="submit" $width={91} $primary>OK</PushButton>
        <PushButton type="button" $width={97}>Cancel</PushButton>
      </Actions>
    </DialogForm>
  </Dialog>
);

export default function App() {
  return (
    <Shell>
      <GlobalStyle />
      <Defs />
      <AddressBar>
        <Glyph width="56" height="26" viewBox="0 0 56 26" role="img" aria-label="Back and forward">
          <path fill="#c6d4e4" d="M8 -2C16 -2 20 1 27 1S40 -2 46 -2C52 -2 54 3 54 10S52 22 46 22S34 19 27 19S14 23 8 22C2 21 0 16 0 10S3 -2 8 -2Z" />
          <path fill="none" stroke="#94a6bc" d="M1 15C-1 4 3 -1 9 -1C16 -1 20 2 27 2S40 -1 46 -1C50 -1 52 1 53 4" />
          <path fill="none" stroke="#727c88" strokeWidth="2" d="M18 11.500H7M11.500 6.500L6.500 11.500L11.500 16.500" />
          <path fill="none" stroke="#9cabba" strokeWidth="2" d="M38 11.500H49M44.500 6.500L49.500 11.500L44.500 16.500" />
        </Glyph>
        <Breadcrumb aria-label="Location">
          <SmallIcon name="app" />
          <CrumbArrow />
          <Redacted cells={19} />
          <CrumbArrow />
          <Crumb href="#sites">Sites</Crumb>
          <CrumbArrow />
          <Crumb href="#default">Default Web Site</Crumb>
          <CrumbArrow />
          <Crumb href="#quotas">QuotasWS</Crumb>
          <CrumbArrow />
        </Breadcrumb>
      </AddressBar>
      <MenuBar>
        <MenuItem type="button">File</MenuItem>
        <MenuItem type="button">View</MenuItem>
        <MenuItem type="button">Help</MenuItem>
      </MenuBar>
      <Panes>
        <Sidebar>
          <PaneTitle>Connections</PaneTitle>
          <SideTools>
            <ToolSlot $width={28}>
              <ToolButton type="button" aria-label="Connect">
                <SmallIcon name="connect" />
                <Caret />
              </ToolButton>
            </ToolSlot>
            <ToolButton type="button" aria-label="Save">
              <SmallIcon name="save" />
            </ToolButton>
            <Divider />
            <ToolButton type="button" aria-label="Up">
              <SmallIcon name="up" />
            </ToolButton>
            <Divider />
            <ToolButton type="button" aria-label="Disconnect">
              <SmallIcon name="disconnect" />
            </ToolButton>
          </SideTools>
          <Tree role="tree">
            {nodes.map((n, i) => (
              <TreeRow key={i} role="treeitem" aria-selected={!!n.selected}>
                <Twisty kind={n.twist} level={n.level} />
                <NodeLabel $selected={n.selected}>
                  <SmallIcon name={n.icon} />
                  <NodeText>{n.text ?? <Redacted cells={56} height={12} />}</NodeText>
                </NodeLabel>
              </TreeRow>
            ))}
          </Tree>
        </Sidebar>
        <Main>
          <PageTitle>
            <LargeIcon name="home" />
            /QuotasWS Home
          </PageTitle>
          <FilterBar>
            <BarLabel htmlFor="filter" $width={34}>Filter:</BarLabel>
            <Combo $width={121}>
              <input id="filter" />
              <Caret />
            </Combo>
            <ToolSlot $width={46} $indent={3}>
              <ToolButton type="button" $muted>
                <SmallIcon name="funnel" />
                Go
              </ToolButton>
            </ToolSlot>
            <ToolSlot $width={11}>
              <Caret $muted />
            </ToolSlot>
            <ToolSlot $width={71}>
              <ToolButton type="button">
                <SmallIcon name="showall" />
                Show All
              </ToolButton>
            </ToolSlot>
            <Divider />
            <BarLabel htmlFor="group" $width={59}>Group by:</BarLabel>
            <Combo $width={115}>
              <select id="group" defaultValue="Area">
                <option>Area</option>
              </select>
              <Caret />
            </Combo>
            <ToolSlot $width={30} $indent={3}>
              <ToolButton type="button" aria-label="View">
                <SmallIcon name="view" />
                <Caret />
              </ToolButton>
            </ToolSlot>
          </FilterBar>
          <FeatureArea>
            {groups.map((g) => (
              <Group key={g.title}>
                <GroupTitle>{g.title}</GroupTitle>
                <FeatureGrid>
                  {g.items.map((f) => (
                    <Feature key={f.text} type="button" $column={f.column}>
                      <LargeIcon name={f.icon} />
                      <span>{f.text}</span>
                    </Feature>
                  ))}
                </FeatureGrid>
              </Group>
            ))}
          </FeatureArea>
        </Main>
      </Panes>
      <EditDialog />
      <FloatingWindow>
        <Glyph width="24" height="2" viewBox="0 0 24 2" aria-hidden="true">
          <path stroke="#111" strokeWidth="2" strokeDasharray="3 2" d="M0 1H18" />
        </Glyph>
      </FloatingWindow>
      <Cursor x={103} y={24} />
      <Cursor x={120} y={226} />
    </Shell>
  );
}
